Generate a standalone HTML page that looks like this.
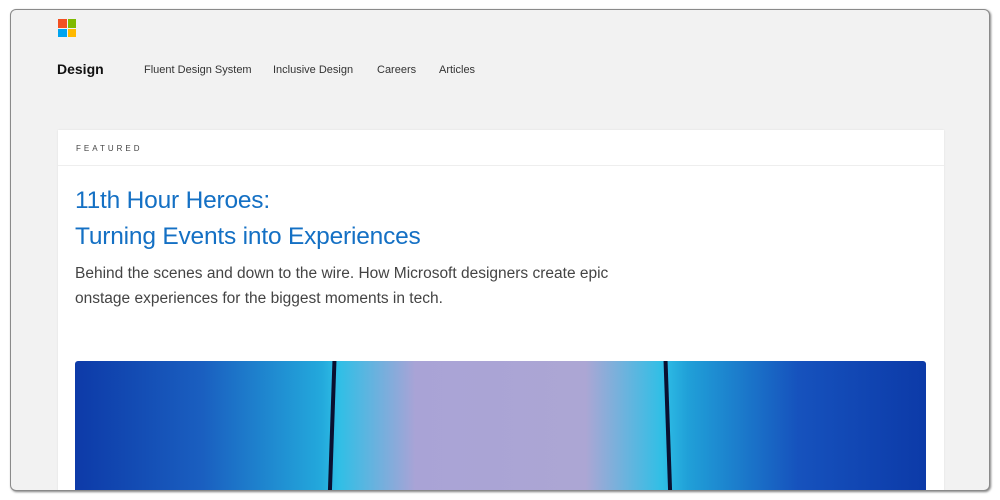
<!DOCTYPE html>
<html><head><style>
*{margin:0;padding:0;box-sizing:border-box}
html,body{width:1000px;height:500px;overflow:hidden}
body{background:#fff;position:relative;font-family:"Liberation Sans",sans-serif}
.win{position:absolute;left:10px;top:9px;width:980px;height:482px;background:#f2f2f2;border:1px solid #8a8a8a;border-radius:6px;box-shadow:1px 1px 2px rgba(0,0,0,.5);overflow:hidden}
.logo{position:absolute;left:47px;top:9px;width:18px;height:18px}
.logo i{position:absolute;width:8.5px;height:8.5px}
.brand{position:absolute;left:46px;top:51px;font-size:14px;font-weight:bold;color:#111}
.nav{position:absolute;top:54px;font-size:11px;color:#333}
.card{position:absolute;left:47px;top:120px;width:886px;height:362px;background:#fff;box-shadow:0 0 2px rgba(0,0,0,.08);overflow:hidden}
.feat{position:absolute;left:18px;top:14px;font-size:8px;letter-spacing:3px;color:#444}
.sep{position:absolute;left:0;right:0;top:35px;border-top:1px solid #eee}
h1{position:absolute;left:17px;top:53px;font-weight:normal;font-size:24.5px;line-height:36px;letter-spacing:-.2px;color:#1470c4}
p{position:absolute;left:17px;top:131px;font-size:15.5px;line-height:25px;color:#444;width:565px}
.img{position:absolute;left:17px;top:231px;width:851px;height:140px;border-radius:3px;overflow:hidden;
background:linear-gradient(90deg,#0d3aa8 0%,#1a5fc0 15%,#23a9dc 29%,#2fbfe6 31%,#a9a3d6 40%,#aca6d4 60%,#2fbfe6 69%,#20a0d8 72%,#1652bd 85%,#0c3aa8 100%)}
.bar{position:absolute;top:0;width:4px;height:140px;background:#0a1030}
</style></head><body>
<div class="win">
<div class="logo"><i style="left:0;top:0;background:#f25022"></i><i style="left:9.5px;top:0;background:#7fba00"></i><i style="left:0;top:9.5px;background:#00a4ef"></i><i style="left:9.5px;top:9.5px;background:#ffb900"></i></div>
<div class="brand">Design</div>
<div class="nav" style="left:133px">Fluent Design System</div>
<div class="nav" style="left:262px">Inclusive Design</div>
<div class="nav" style="left:366px">Careers</div>
<div class="nav" style="left:428px">Articles</div>
<div class="card">
<div class="feat">FEATURED</div>
<div class="sep"></div>
<h1>11th Hour Heroes:<br>Turning Events into Experiences</h1>
<p>Behind the scenes and down to the wire. How Microsoft designers create epic onstage experiences for the biggest moments in tech.</p>
<div class="img"><div class="bar" style="left:255px;transform:skewX(-2deg)"></div><div class="bar" style="left:591px;transform:skewX(2deg)"></div></div>
</div>
</div>
</body></html>
